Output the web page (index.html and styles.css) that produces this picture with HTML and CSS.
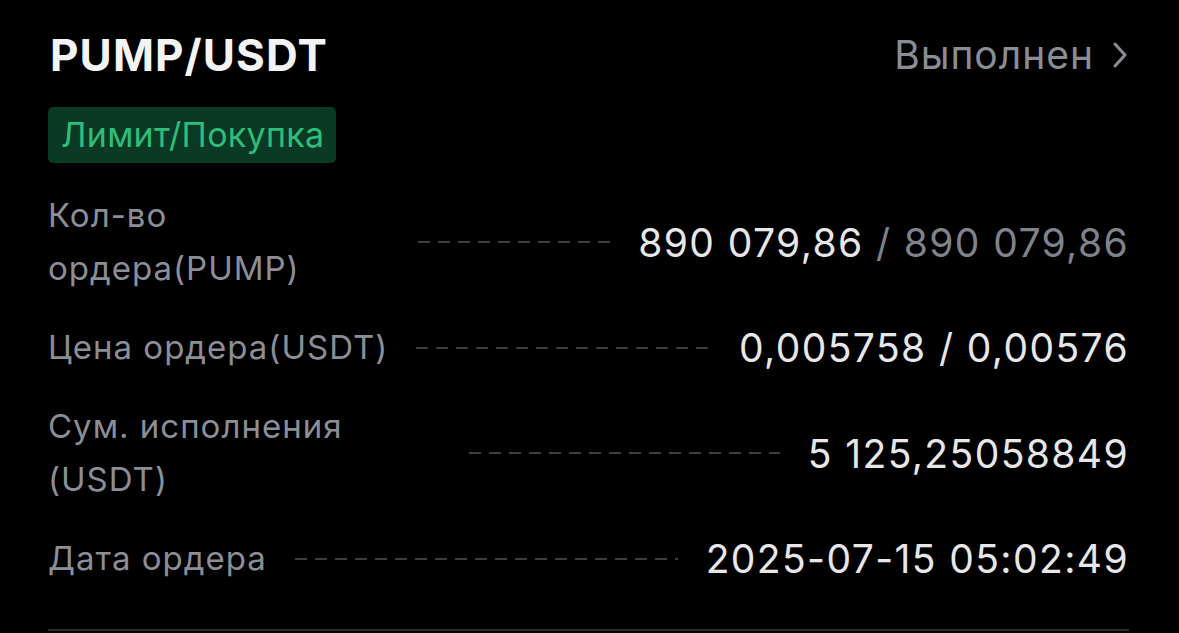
FILE: index.html
```html
<!DOCTYPE html>
<html lang="ru">
<head>
<meta charset="utf-8">
<link rel="stylesheet" href="styles.css">
</head>
<body>
<div class="card">
  <div class="header">
    <div class="pair">PUMP/USDT</div>
    <div class="status">Выполнен
      <svg class="chev" width="18" height="30" viewBox="0 0 18 30"><path d="M4 4 L14 15 L4 26" fill="none" stroke="#8a8d96" stroke-width="3" stroke-linecap="round" stroke-linejoin="round"/></svg>
    </div>
  </div>
  <div class="badge">Лимит/Покупка</div>
  <div class="rows">
    <div class="row">
      <div class="label label-qty">Кол-во ордера(PUMP)</div>
      <div class="dash"></div>
      <div class="value">890 079,86 <span class="sec">/ 890 079,86</span></div>
    </div>
    <div class="row">
      <div class="label">Цена ордера(USDT)</div>
      <div class="dash"></div>
      <div class="value">0,005758 / 0,00576</div>
    </div>
    <div class="row">
      <div class="label label-sum">Сум. исполнения (USDT)</div>
      <div class="dash"></div>
      <div class="value">5 125,25058849</div>
    </div>
    <div class="row">
      <div class="label">Дата ордера</div>
      <div class="dash"></div>
      <div class="value">2025-07-15 05:02:49</div>
    </div>
  </div>
</div>
</body>
</html>
```

FILE: styles.css
```css
html, body {
  margin: 0;
  padding: 0;
  background: #000;
}
body {
  font-family: Inter, "Noto Sans", sans-serif;
  width: 1179px;
  height: 633px;
  overflow: hidden;
}
.card {
  box-sizing: border-box;
  width: 1081px;
  margin-left: 48px;
  padding: 27px 0 31px 0;
  border-bottom: 2px solid #2a2c31;
}
.header {
  display: flex;
  justify-content: space-between;
  align-items: center;
  height: 56px;
}
.pair {
  color: #f4f4f5;
  font-weight: 700;
  font-size: 44px;
  letter-spacing: 1.1px;
  line-height: 56px;
  margin-left: 2px;
}
.status {
  color: #8a8d96;
  font-size: 39px;
  letter-spacing: 1px;
  line-height: 56px;
  display: flex;
  align-items: center;
  gap: 17px;
}
.chev {
  display: block;
}
.badge {
  display: inline-block;
  margin-top: 24px;
  height: 56px;
  line-height: 56px;
  padding: 0 12px 0 13px;
  background: #0b3a24;
  color: #2ebd7b;
  font-size: 34px;
  letter-spacing: 0.3px;
  border-radius: 5px;
}
.rows {
  margin-top: 13px;
}
.row {
  display: flex;
  align-items: center;
  padding: 13px 0;
}
.label {
  color: #8b8e97;
  font-size: 33px;
  letter-spacing: 1px;
  line-height: 53px;
  flex: 0 0 auto;
}
.label-qty {
  width: 342px;
}
.label-sum {
  width: 393px;
}
.dash {
  flex: 1 1 auto;
  margin: 0 28px;
  height: 2px;
  background-image: linear-gradient(to right, #3a3d44 0 12px, transparent 12px 20px);
  background-size: 20px 2px;
  background-repeat: repeat-x;
}
.value {
  color: #e7e7e9;
  font-size: 39px;
  line-height: 53px;
  letter-spacing: 1.4px;
  white-space: nowrap;
  flex: 0 0 auto;
}
.sec {
  color: #7f828b;
}
```
